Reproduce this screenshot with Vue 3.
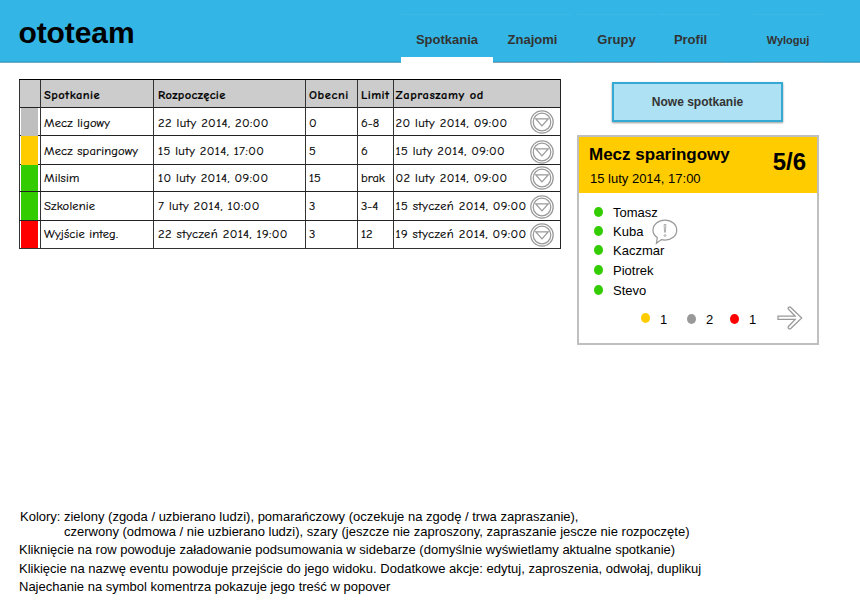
<script setup>
const tabs = [
  { name: 'Spotkania', cls: 'active' },
  { name: 'Znajomi', cls: 'friends' },
  { name: 'Grupy', cls: 'groups' },
  { name: 'Profil', cls: 'profile' },
  { name: 'Wyloguj', cls: 'logout' },
]
const headings = ['', 'Spotkanie', 'Rozpoczęcie', 'Obecni', 'Limit', 'Zapraszamy od']
const rows = [
  { color: 'gray', h: 28, line: 30, icon: 3, cells: ['Mecz ligowy', '22 luty 2014, 20:00', '0', '6-8', '20 luty 2014, 09:00'] },
  { color: 'yellow', h: 29, line: 30, icon: 5, cells: ['Mecz sparingowy', '15 luty 2014, 17:00', '5', '6', '15 luty 2014, 09:00'] },
  { color: 'green', h: 27, line: 26, icon: 2, cells: ['Milsim', '10 luty 2014, 09:00', '15', 'brak', '02 luty 2014, 09:00'] },
  { color: 'green', h: 29, line: 28, icon: 4, cells: ['Szkolenie', '7 luty 2014, 10:00', '3', '3-4', '15 styczeń 2014, 09:00'] },
  { color: 'red', h: 28, line: 26, icon: 3, cells: ['Wyjście integ.', '22 styczeń 2014, 19:00', '3', '12', '19 styczeń 2014, 09:00'] },
]
const people = [
  { name: 'Tomasz', h: 19 },
  { name: 'Kuba', h: 19, comment: true },
  { name: 'Kaczmar', h: 20 },
  { name: 'Piotrek', h: 20 },
  { name: 'Stevo', h: 20 },
]
</script>

<template>
  <div class="page">
    <header class="topbar">
      <h1>ototeam</h1>
      <nav>
        <a v-for="t in tabs" :key="t.name" :class="['tab', t.cls]">{{ t.name }}</a>
      </nav>
    </header>

    <main>
      <section class="table">
        <div class="row head">
          <div v-for="(h, i) in headings" :key="i" :class="['cell', 'c' + i]"><span>{{ h }}</span></div>
        </div>
        <div v-for="(r, n) in rows" :key="n" class="row" :style="{ height: r.h + 'px', lineHeight: r.line + 'px' }">
          <div class="cell swatch"><i :class="r.color"></i></div>
          <div v-for="(c, i) in r.cells" :key="i" :class="['cell', 'c' + (i + 1)]">
            <span>{{ c }}</span>
            <svg v-if="i === 4" class="drop" :style="{ marginTop: r.icon - 1 + 'px' }" width="24" height="24" viewBox="0 0 24 24">
              <circle cx="12" cy="12" r="11.2" />
              <circle cx="12" cy="12" r="8.8" />
              <path d="M5.8 8.8H18.2L12 15.8Z" />
            </svg>
          </div>
        </div>
      </section>

      <aside>
        <button>Nowe spotkanie</button>
        <div class="card">
          <div class="card-head">
            <div>
              <h2>Mecz sparingowy</h2>
              <p>15 luty 2014, 17:00</p>
            </div>
            <strong>5/6</strong>
          </div>
          <ul>
            <li v-for="p in people" :key="p.name" :style="{ height: p.h + 'px' }">
              <i class="dot green"></i><span>{{ p.name }}</span>
              <svg v-if="p.comment" class="bubble" width="26" height="26" viewBox="0 0 26 26">
                <path d="M5.3 18.5C2.800 16.800 1 14.300 1 11.200C1 5.500 6.400 1.200 13 1.200S24.700 5.500 24.700 11.200S19.400 21 13 21C11.700 21 10.500 20.900 9.400 20.600L4.400 24.300Z" />
                <path class="mark" d="M12.100 5.500H13.900L13.400 13.300H12.600Z" />
                <circle class="mark" cx="13" cy="16.500" r=".9" />
              </svg>
            </li>
          </ul>
          <div class="totals">
            <i class="dot yellow"></i><span class="n1">1</span>
            <i class="dot darkgray"></i><span class="n2">2</span>
            <i class="dot red"></i><span class="n3">1</span>
            <svg class="arrow" width="26" height="24" viewBox="0 0 26 24">
              <path d="M1 10.200H18.200L11.200 3Q10.700 1.700 12 1.200Q13 .7 13.800 1.500L24.700 12L13.800 22.500Q12.800 23.300 11.700 22.500Q10.600 21.700 11.400 20.500L18.200 13.400H1Z" />
            </svg>
          </div>
        </div>
      </aside>
    </main>

    <footer>
      <p class="legend"><span>Kolory: </span><span class="l1">zielony (zgoda / uzbierano ludzi), pomarańczowy (oczekuje na zgodę / trwa zapraszanie),</span></p>
      <p class="legend second">czerwony (odmowa / nie uzbierano ludzi), szary (jeszcze nie zaproszony, zapraszanie jescze nie rozpoczęte)</p>
      <p class="note a">Kliknięcie na row powoduje załadowanie podsumowania w sidebarze (domyślnie wyświetlamy aktualne spotkanie)</p>
      <p class="note b">Klikięcie na nazwę eventu powoduje przejście do jego widoku. Dodatkowe akcje: edytuj, zaproszenia, odwołaj, duplikuj</p>
      <p class="note c">Najechanie na symbol komentrza pokazuje jego treść w popover</p>
    </footer>
  </div>
</template>

<style>
body { margin: 0; background: #fff; }
</style>

<style scoped>
* { box-sizing: border-box; }
h1, h2, p, ul { margin: 0; padding: 0; }
.page { width: 860px; height: 607px; overflow: hidden; display: flex; flex-direction: column; font: 13px/15px "Liberation Sans", Arial, sans-serif; color: #000; background: #fff; }
.topbar { height: 63px; flex: none; display: flex; background: #33b5e5; box-shadow: inset 0 -1px #6faac1, inset 0 -2px #2fa7d5; }
h1 { width: 401px; padding: 15px 0 0 18.500px; font-size: 30px; line-height: 35px; letter-spacing: -.1px; }
nav { display: flex; padding-top: 14px; }
.tab { height: 49px; padding-top: 17px; line-height: 16px; font-size: 13px; font-weight: bold; color: #333; border-top: 1px solid #3db7e4; border-bottom: 1px solid #84a5b1; text-align: center; white-space: nowrap; }
.active { width: 92px; border-bottom: 6px solid #fff; }
.friends { width: 79px; }
.groups { width: 79px; margin-left: 5px; }
.profile { width: 63px; margin-left: 3px; }
.logout { width: 68px; margin-left: 32px; font-size: 11px; }
main { display: flex; height: 446px; flex: none; }
.table { width: 542px; height: 170px; margin: 16px 0 0 19px; flex: none; border-right: 1px solid #222; border-bottom: 1px solid #333; font-family: "Comic Sans MS", "Comic Neue", Lato, sans-serif; font-size: 12.5px; -webkit-text-stroke: .2px #000; }
.row { display: grid; grid-template-columns: 21px 113px 152px 52px 36px 167px; border-top: 1px solid #222; }
.head { height: 28px; line-height: 30px; background: #ccc; font-weight: bold; border-top-color: #000; -webkit-text-stroke: .15px #000; }
.cell { display: flex; border-left: 1px solid #333; padding-left: 3px; white-space: nowrap; min-width: 0; }
.row .c5 { padding-left: 1.500px; justify-content: space-between; padding-right: 6px; }
.c1 { letter-spacing: .17px; }
.c2, .c5 { letter-spacing: .43px; }
.row .c2 { padding-left: 4px; }
.head .c1 { letter-spacing: .45px; }
.head .c2 { letter-spacing: .33px; }
.head .c3 { letter-spacing: .6px; }
.head .c4 { letter-spacing: .4px; }
.head .c5 { letter-spacing: .57px; }
.swatch { padding: 0 2px 0 1px; }
.swatch i { width: 17px; }
.gray { background: #bfbfbf; }
.yellow { background: #fc0; }
.green { background: #3c0; }
.red { background: #f00; }
.darkgray { background: #999; }
svg { fill: none; stroke: #999; stroke-width: 1.25; flex: none; }
aside { margin-left: 16px; width: 242px; padding-top: 18px; }
button { display: block; margin: 1px 0 0 35px; width: 171px; height: 40px; padding: 0; border: 2px solid #33a9d3; background: #ade1f3; box-shadow: 0 1px 2px #999; color: #333; font: bold 12px/36px "Liberation Sans", Arial, sans-serif; }
.card { margin-top: 13px; height: 210px; border: 2px solid #bfbfbf; }
.card-head { height: 56px; background: #fc0; display: flex; justify-content: space-between; padding: 0 11px 0 10px; }
h2 { font-size: 17px; line-height: 20px; padding-top: 8px; white-space: nowrap; }
.card-head p { padding: 6px 0 0 1px; }
strong { font-size: 24px; line-height: 28px; padding-top: 11px; }
ul { list-style: none; padding: 12px 0 0 15px; height: 118px; }
li { display: flex; line-height: 15px; }
.dot { width: 9px; height: 10px; border-radius: 50%; flex: none; }
li .dot { margin: 2px 10px 0 0; }
.bubble { margin: -5px 0 0 9px; }
.mark { stroke-width: .8; }
.totals { display: flex; padding: 1px 0 0 62px; }
.totals .dot { margin-top: 1px; }
.totals .darkgray, .totals .red { margin-top: 2px; }
.n1 { width: 27px; margin-left: 10px; }
.n1 + .dot { margin-right: 10px; }
.n2 { width: 17px; margin-right: 7px; }
.n3 { width: 29px; margin-left: 10px; }
.arrow { margin: -6px 0 0 -1px; }
footer { height: 98px; white-space: nowrap; }
.legend { padding-left: 20px; display: flex; }
.legend .l1 { padding-left: 3.500px; }
.second { padding-left: 64px; }
.note { padding-left: 19px; margin-top: 3px; }
.note.b { margin-top: 4px; }
</style>
